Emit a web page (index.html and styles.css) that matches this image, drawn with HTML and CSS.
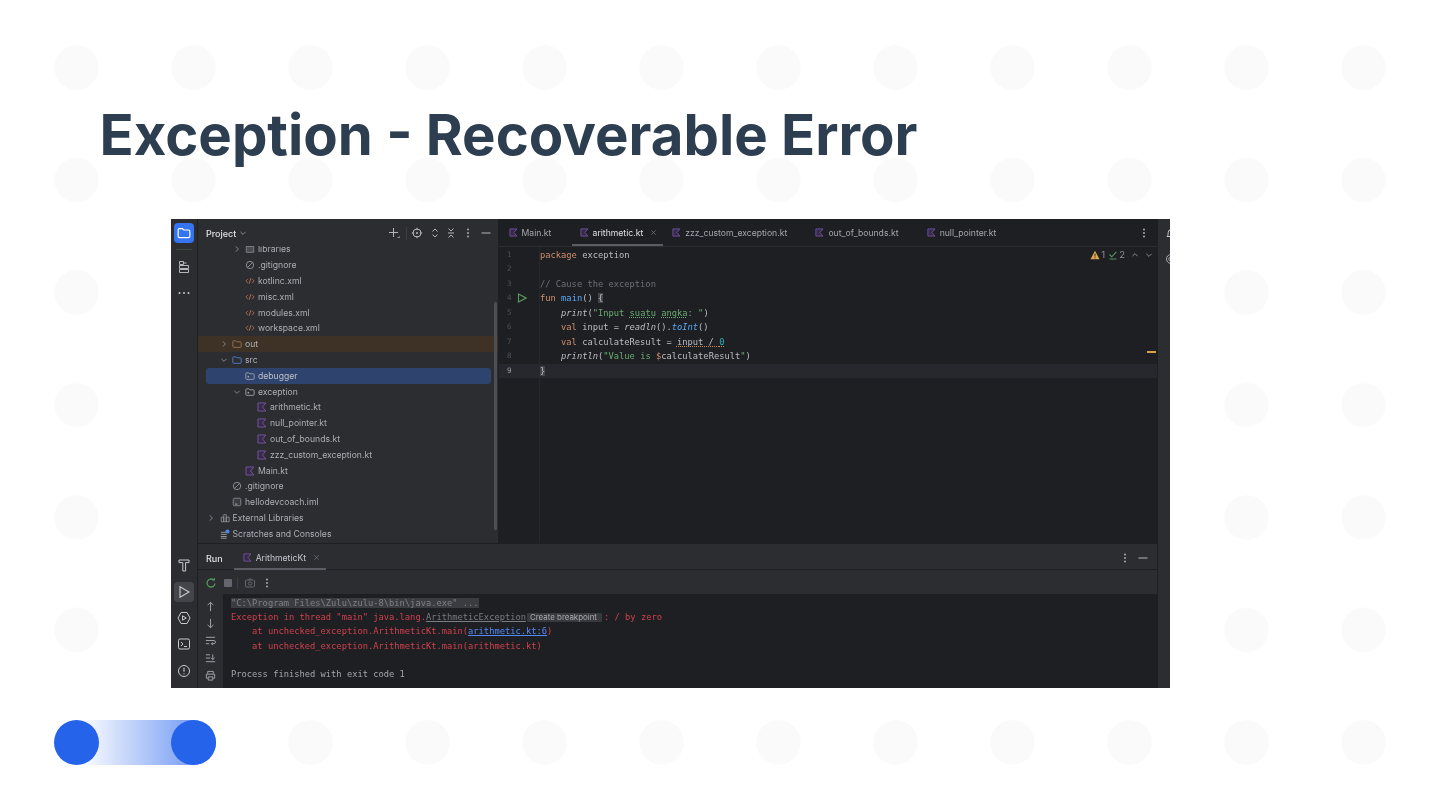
FILE: index.html
```html
<!DOCTYPE html>
<html lang="en">
<head>
<meta charset="utf-8">
<title>Exception - Recoverable Error</title>
<link rel="stylesheet" href="styles.css">
</head>
<body>
<svg class="defs" width="0" height="0" aria-hidden="true">
  <symbol id="kt" viewBox="0 0 12 12"><path d="M1.2 1.2h9.4L6.6 6l4 4.8H1.2z" fill="#352b49" stroke="#70539f" stroke-width="1.2"/></symbol>
  <symbol id="folder" viewBox="0 0 12 12"><path d="M1 3.2c0-.6.4-1 1-1h2.6l1.2 1.2H10c.6 0 1 .4 1 1v4.6c0 .6-.4 1-1 1H2c-.6 0-1-.4-1-1z" fill="none" stroke="currentColor" stroke-width="1"/></symbol>
  <symbol id="pkg" viewBox="0 0 12 12"><path d="M1 3.2c0-.6.4-1 1-1h2.6l1.2 1.2H10c.6 0 1 .4 1 1v4.6c0 .6-.4 1-1 1H2c-.6 0-1-.4-1-1z" fill="none" stroke="#a8abb2" stroke-width="1"/><circle cx="4" cy="6.8" r="1" fill="#a8abb2"/></symbol>
  <symbol id="ignore" viewBox="0 0 12 12"><circle cx="6" cy="6" r="4.4" fill="none" stroke="#9a9da5" stroke-width="1"/><path d="M3 9l6-6" stroke="#9a9da5" stroke-width="1"/></symbol>
  <symbol id="xml" viewBox="0 0 12 12"><path d="M3.6 3.4L1 6l2.6 2.6M8.4 3.4L11 6 8.4 8.6" fill="none" stroke="#b5654a" stroke-width="1.1"/><path d="M7 2.6L5 9.4" stroke="#c07a60" stroke-width="1"/></symbol>
  <symbol id="lib" viewBox="0 0 12 12"><path d="M1.5 3h9v7h-9z" fill="#4a4c52" stroke="#85888f" stroke-width="1"/></symbol>
  <symbol id="libs" viewBox="0 0 12 12"><path d="M1.5 5h3v5.5h-3zM4.5 2h3v8.5h-3zM7.5 5h3.5v5.5H7.5z" fill="none" stroke="#9a9da5" stroke-width=".9"/></symbol>
  <symbol id="scratch" viewBox="0 0 12 12"><path d="M1 4h7M1 6.5h7M1 9h7M1 11h7" stroke="#9a9da5" stroke-width="1.1"/><circle cx="9" cy="3" r="2.5" fill="#4f83e8"/></symbol>
  <symbol id="iml" viewBox="0 0 12 12"><rect x="1.5" y="1.5" width="9" height="9" rx="1.5" fill="#3a3c40" stroke="#8c8f96"/><path d="M3.5 8.5h3" stroke="#b4b6bc"/></symbol>
  <symbol id="chev-r" viewBox="0 0 8 8"><path d="M2.8 1.4L5.4 4 2.8 6.6" fill="none" stroke="#85888f" stroke-width="1"/></symbol>
  <symbol id="chev-d" viewBox="0 0 8 8"><path d="M1.4 2.8L4 5.4l2.6-2.6" fill="none" stroke="#85888f" stroke-width="1"/></symbol>
  <symbol id="chev-u" viewBox="0 0 8 8"><path d="M1.4 5.2L4 2.6l2.6 2.6" fill="none" stroke="#85888f" stroke-width="1"/></symbol>
  <symbol id="dots-v" viewBox="0 0 12 12"><circle cx="6" cy="2.5" r=".9" fill="#b4b6bc"/><circle cx="6" cy="6" r=".9" fill="#b4b6bc"/><circle cx="6" cy="9.5" r=".9" fill="#b4b6bc"/></symbol>
  <symbol id="minus" viewBox="0 0 12 12"><path d="M1.5 6h9" stroke="#b4b6bc" stroke-width="1"/></symbol>
  <symbol id="close" viewBox="0 0 8 8"><path d="M1.5 1.5l5 5M6.5 1.5l-5 5" stroke="#6f7278" stroke-width=".9"/></symbol>
</svg>

<main class="slide">
  <h1 class="title">Exception - Recoverable Error</h1>

  <section class="ide">
    <aside class="rail">
      <div class="rail-group">
        <span class="rail-btn active"><svg class="i14" viewBox="0 0 12 12"><path d="M1 3.2c0-.6.4-1 1-1h2.6l1.2 1.2H10c.6 0 1 .4 1 1v4.6c0 .6-.4 1-1 1H2c-.6 0-1-.4-1-1z" fill="none" stroke="#fff" stroke-width="1"/></svg></span>
        <span class="rail-sep"></span>
        <span class="rail-btn"><svg class="i14" viewBox="0 0 14 14"><path d="M2.500 1.500h4v3h-4zM2.500 5.500h9v3h-9zM2.500 9.500h9v3h-9zM6.500 3h3" fill="none" stroke="#b4b6bc"/></svg></span>
        <span class="rail-btn"><svg class="i14" viewBox="0 0 14 14"><circle cx="2.500" cy="7" r="1" fill="#c8cacf"/><circle cx="7" cy="7" r="1" fill="#c8cacf"/><circle cx="11.500" cy="7" r="1" fill="#c8cacf"/></svg></span>
      </div>
      <div class="rail-group">
        <span class="rail-btn"><svg class="i14" viewBox="0 0 14 14"><path d="M2 2h10v2.600H8.600V13H5.800V4.600H2z" fill="none" stroke="#c8cacf"/></svg></span>
        <span class="rail-btn current"><svg class="i14" viewBox="0 0 14 14"><path d="M3 1.800L12 7l-9 5.200z" fill="none" stroke="#c8cacf" stroke-width="1.100"/></svg></span>
        <span class="rail-btn"><svg class="i14" viewBox="0 0 14 14"><path d="M4 1.500h6L13 7l-3 5.500H4L1 7z" fill="none" stroke="#c8cacf"/><path d="M5.500 4.800L9.300 7l-3.800 2.200z" fill="none" stroke="#c8cacf"/></svg></span>
        <span class="rail-btn"><svg class="i14" viewBox="0 0 14 14"><rect x="1.500" y="2" width="11" height="10" rx="1.500" fill="none" stroke="#c8cacf"/><path d="M4 5l2 2-2 2M7 9.500h3" fill="none" stroke="#c8cacf"/></svg></span>
        <span class="rail-btn"><svg class="i14" viewBox="0 0 14 14"><circle cx="7" cy="7" r="5.500" fill="none" stroke="#c8cacf"/><path d="M7 3.800v4M7 9.300v1" stroke="#c8cacf" stroke-width="1.100"/></svg></span>
      </div>
    </aside>

    <div class="workspace">
      <div class="top">
        <section class="project">
          <header class="panel-head">
            <span class="panel-name">Project</span>
            <svg class="i8 chev" viewBox="0 0 8 8"><use href="#chev-d"/></svg>
            <span class="panel-tools">
              <svg class="i12 t-plus" viewBox="0 0 12 12"><path d="M5.500 1v9M1 5.500h9" stroke="#b4b6bc"/><path d="M9.500 10.500h2v-1" fill="#b4b6bc" stroke="#b4b6bc" stroke-width=".6"/></svg>
              <span class="tool-sep"></span>
              <svg class="i12 t-target" viewBox="0 0 12 12"><circle cx="6" cy="6" r="4" fill="none" stroke="#b4b6bc"/><path d="M6 .8v2.400M6 8.800v2.400M.8 6h2.400M8.800 6h2.400" stroke="#b4b6bc"/><circle cx="6" cy="6" r="1" fill="#b4b6bc"/></svg>
              <svg class="i12 t-updown" viewBox="0 0 12 12"><path d="M3.500 4.500L6 2l2.500 2.500M3.500 7.500L6 10l2.500-2.500" fill="none" stroke="#b4b6bc"/></svg>
              <svg class="i12 t-collapse" viewBox="0 0 12 12"><path d="M3.500 1.500L6 4l2.500-2.500M3.500 10.500L6 8l2.500 2.500M3 6h6" fill="none" stroke="#b4b6bc"/></svg>
              <svg class="i12 t-dots" viewBox="0 0 12 12"><use href="#dots-v"/></svg>
              <svg class="i12 t-min" viewBox="0 0 12 12"><use href="#minus"/></svg>
            </span>
          </header>
          <div class="tree-clip">
            <ul class="tree">
              <li class="row d3"><svg class="chevron" viewBox="0 0 8 8"><use href="#chev-r"/></svg><svg class="ic" viewBox="0 0 12 12"><use href="#lib"/></svg>libraries</li>
              <li class="row d3"><svg class="ic" viewBox="0 0 12 12"><use href="#ignore"/></svg>.gitignore</li>
              <li class="row d3"><svg class="ic" viewBox="0 0 12 12"><use href="#xml"/></svg>kotlinc.xml</li>
              <li class="row d3"><svg class="ic" viewBox="0 0 12 12"><use href="#xml"/></svg>misc.xml</li>
              <li class="row d3"><svg class="ic" viewBox="0 0 12 12"><use href="#xml"/></svg>modules.xml</li>
              <li class="row d3"><svg class="ic" viewBox="0 0 12 12"><use href="#xml"/></svg>workspace.xml</li>
              <li class="row d2 excluded"><svg class="chevron" viewBox="0 0 8 8"><use href="#chev-r"/></svg><svg class="ic brown" viewBox="0 0 12 12"><use href="#folder"/></svg>out</li>
              <li class="row d2"><svg class="chevron" viewBox="0 0 8 8"><use href="#chev-d"/></svg><svg class="ic blue" viewBox="0 0 12 12"><use href="#folder"/></svg>src</li>
              <li class="row d3 selected"><svg class="ic" viewBox="0 0 12 12"><use href="#pkg"/></svg>debugger</li>
              <li class="row d3"><svg class="chevron" viewBox="0 0 8 8"><use href="#chev-d"/></svg><svg class="ic" viewBox="0 0 12 12"><use href="#pkg"/></svg>exception</li>
              <li class="row d4"><svg class="ic" viewBox="0 0 12 12"><use href="#kt"/></svg>arithmetic.kt</li>
              <li class="row d4"><svg class="ic" viewBox="0 0 12 12"><use href="#kt"/></svg>null_pointer.kt</li>
              <li class="row d4"><svg class="ic" viewBox="0 0 12 12"><use href="#kt"/></svg>out_of_bounds.kt</li>
              <li class="row d4"><svg class="ic" viewBox="0 0 12 12"><use href="#kt"/></svg>zzz_custom_exception.kt</li>
              <li class="row d3"><svg class="ic" viewBox="0 0 12 12"><use href="#kt"/></svg>Main.kt</li>
              <li class="row d2"><svg class="ic" viewBox="0 0 12 12"><use href="#ignore"/></svg>.gitignore</li>
              <li class="row d2"><svg class="ic" viewBox="0 0 12 12"><use href="#iml"/></svg>hellodevcoach.iml</li>
              <li class="row d1"><svg class="chevron" viewBox="0 0 8 8"><use href="#chev-r"/></svg><svg class="ic" viewBox="0 0 12 12"><use href="#libs"/></svg>External Libraries</li>
              <li class="row d1"><svg class="ic" viewBox="0 0 12 12"><use href="#scratch"/></svg>Scratches and Consoles</li>
            </ul>
            <span class="tree-scroll"></span>
          </div>
        </section>

        <section class="editor">
          <nav class="tabs">
            <span class="tab"><svg class="ic" viewBox="0 0 12 12"><use href="#kt"/></svg>Main.kt</span>
            <span class="tab on"><svg class="ic" viewBox="0 0 12 12"><use href="#kt"/></svg>arithmetic.kt<svg class="x" viewBox="0 0 8 8"><use href="#close"/></svg></span>
            <span class="tab after-on"><svg class="ic" viewBox="0 0 12 12"><use href="#kt"/></svg>zzz_custom_exception.kt</span>
            <span class="tab"><svg class="ic" viewBox="0 0 12 12"><use href="#kt"/></svg>out_of_bounds.kt</span>
            <span class="tab"><svg class="ic" viewBox="0 0 12 12"><use href="#kt"/></svg>null_pointer.kt</span>
            <svg class="i12 tabs-more" viewBox="0 0 12 12"><use href="#dots-v"/></svg>
          </nav>
          <div class="code-area">
            <div class="gutter">
              <div class="ln">1</div><div class="ln">2</div><div class="ln">3</div>
              <div class="ln">4<svg class="gutter-run" viewBox="0 0 10 10"><path d="M1.500 1l7.500 4-7.500 4z" fill="none" stroke="#57965c" stroke-width="1.200"/></svg></div>
              <div class="ln">5</div><div class="ln">6</div><div class="ln">7</div><div class="ln">8</div>
              <div class="ln cur">9</div>
            </div>
            <div class="code">
              <div class="cl"><span class="kw">package</span> exception</div>
              <div class="cl"></div>
              <div class="cl cmt">// Cause the exception</div>
              <div class="cl"><span class="kw">fun</span> <span class="fn">main</span>() <span class="brace">{</span></div>
              <div class="cl">    <i>print</i>(<span class="str">"Input <u class="typo">suatu</u> <u class="typo">angka</u>: "</span>)</div>
              <div class="cl">    <span class="kw">val</span> input = <i>readln</i>().<i class="fn">toInt</i>()</div>
              <div class="cl">    <span class="kw">val</span> calculateResult = <u class="warn">input / <span class="num">0</span></u></div>
              <div class="cl">    <i>println</i>(<span class="str">"Value is <span class="kw">$</span></span>calculateResult<span class="str">"</span>)</div>
              <div class="cl caret"><span class="brace">}</span></div>
            </div>
            <div class="inspect">
              <svg class="i10" viewBox="0 0 10 10"><path d="M5 .8l4.500 8.400H.5z" fill="#e0a84a"/><path d="M5 3.600v3M5 7.400v1" stroke="#2b2d30"/></svg><span>1</span>
              <svg class="i10 gap" viewBox="0 0 10 10"><path d="M1.500 4.500l2.300 2.300 4.500-5M1.500 9h7" fill="none" stroke="#57965c" stroke-width="1.100"/></svg><span>2</span>
              <svg class="i8 gap2" viewBox="0 0 8 8"><use href="#chev-u"/></svg>
              <svg class="i8 gap2" viewBox="0 0 8 8"><use href="#chev-d"/></svg>
            </div>
            <span class="stripe"></span>
          </div>
        </section>
      </div>

      <section class="run">
        <header class="run-head">
          <span class="panel-name">Run</span>
          <span class="run-tab"><svg class="ic" viewBox="0 0 12 12"><use href="#kt"/></svg>ArithmeticKt<svg class="x" viewBox="0 0 8 8"><use href="#close"/></svg></span>
          <span class="run-tools">
            <svg class="i12" viewBox="0 0 12 12"><use href="#dots-v"/></svg>
            <svg class="i12" viewBox="0 0 12 12"><use href="#minus"/></svg>
          </span>
        </header>
        <div class="run-bar">
          <svg class="i12" viewBox="0 0 12 12"><path d="M10 6.500A4 4 0 1 1 8.700 3" fill="none" stroke="#57965c" stroke-width="1.300"/><path d="M7 3.500h3v-3z" fill="#57965c"/></svg>
          <span class="stop"></span>
          <span class="bar-sep"></span>
          <svg class="i12 dim" viewBox="0 0 12 12"><rect x="1.500" y="3" width="9" height="7" rx="1" fill="none" stroke="#63666c"/><circle cx="6" cy="6.500" r="1.700" fill="none" stroke="#63666c"/><path d="M4.500 3l.5-1h2l.5 1" fill="none" stroke="#63666c"/></svg>
          <svg class="i12" viewBox="0 0 12 12"><use href="#dots-v"/></svg>
        </div>
        <div class="run-body">
          <div class="run-side">
            <svg class="i11" viewBox="0 0 12 12"><path d="M6 11V1.500M2.800 4.500L6 1.500l3.200 3" fill="none" stroke="#a8abb2"/></svg>
            <svg class="i11" viewBox="0 0 12 12"><path d="M6 1v9.500M2.800 7.500L6 10.500l3.200-3" fill="none" stroke="#a8abb2"/></svg>
            <svg class="i11" viewBox="0 0 12 12"><path d="M1 2.500h10M1 6h9a1.800 1.800 0 0 1 0 3.500H7M8.500 8l-1.500 1.500L8.500 11M1 9.500h3.500" fill="none" stroke="#a8abb2"/></svg>
            <svg class="i11" viewBox="0 0 12 12"><path d="M1 2h4.500M1 5.500h4.500M1 9.500h10M8.500 1.500v5.500M6.500 5.200L8.500 7.200l2-2" fill="none" stroke="#a8abb2"/></svg>
            <svg class="i11" viewBox="0 0 12 12"><path d="M3 4V1.500h6V4M3 9H1.500V4.500h9V9H9M3.500 7.500h5v3.500h-5z" fill="none" stroke="#a8abb2"/></svg>
            <svg class="i11" viewBox="0 0 12 12"><path d="M3 4.500h6M3 8h6" stroke="#a8abb2"/></svg>
          </div>
          <div class="console">
            <div class="cn"><span class="cmd">"C:\Program Files\Zulu\zulu-8\bin\java.exe" ...</span></div>
            <div class="cn err">Exception in thread "main" java.lang.<u class="exc">ArithmeticException</u><span class="bp">Create breakpoint</span>: / by zero</div>
            <div class="cn err">    at unchecked_exception.ArithmeticKt.main(<u class="link">arithmetic.kt:6</u>)</div>
            <div class="cn err">    at unchecked_exception.ArithmeticKt.main(arithmetic.kt)</div>
            <div class="cn"></div>
            <div class="cn">Process finished with exit code 1</div>
          </div>
        </div>
      </section>
    </div>

    <aside class="rail-right">
      <svg class="i12" viewBox="0 0 12 12"><path d="M2 9.500c1-1 1.200-2 1.200-4a2.800 2.800 0 0 1 5.600 0c0 2 .2 3 1.200 4zM5 11h2" fill="none" stroke="#c8cacf"/></svg>
      <svg class="i12" viewBox="0 0 12 12"><circle cx="6" cy="6" r="4.500" fill="none" stroke="#a8abb2"/><circle cx="6" cy="6" r="2.200" fill="none" stroke="#a8abb2"/></svg>
    </aside>
  </section>

  <div class="pager"><span class="knob"></span><span class="knob"></span></div>
</main>
</body>
</html>
```

FILE: styles.css
```css
* { box-sizing: border-box; }
html, body { margin: 0; padding: 0; }
body {
  width: 1440px;
  height: 810px;
  overflow: hidden;
  background-color: #fff;
  background-image: radial-gradient(circle 22.5px at center, #fafafa 97%, rgba(250,250,250,0) 100%);
  background-size: 117px 112.5px;
  background-position: 18px 11.25px;
  font-family: Inter, "Liberation Sans", sans-serif;
}
.defs { position: absolute; }
.slide { display: flex; flex-direction: column; height: 810px; }
.title {
  margin: 100px 0 0 99.5px;
  height: 70px;
  font-size: 56.3px;
  line-height: 70px;
  font-weight: 700;
  color: #2c3e50;
}
svg { flex: none; display: block; }
.i8 { width: 8px; height: 8px; }
.i10 { width: 10px; height: 10px; }
.i11 { width: 11px; height: 11px; }
.i12 { width: 12px; height: 12px; }
.i14 { width: 14px; height: 14px; }

.ide {
  margin: 49px 0 0 171px;
  width: 999px;
  height: 469px;
  display: flex;
  background: #2b2d30;
  color: #bcbec4;
  font-size: 8.65px;
  overflow: hidden;
  filter: blur(.5px);
}
.rail {
  width: 27px;
  flex: none;
  display: flex;
  flex-direction: column;
  justify-content: space-between;
  border-right: 1px solid #1e1f22;
  padding: 4px 0 7.5px;
}
.rail-group { display: flex; flex-direction: column; align-items: center; gap: 6.3px; }
.rail-btn { width: 20px; height: 20px; border-radius: 4px; display: flex; align-items: center; justify-content: center; }
.rail-btn.active { background: #3574f0; }
.rail-btn.current { background: #43454a; }
.rail-sep { width: 16px; height: 1px; background: #3d4a40; }

.workspace { flex: 1; min-width: 0; display: flex; flex-direction: column; }
.top { height: 325px; display: flex; border-bottom: 1px solid #1e1f22; }

.project { width: 301px; flex: none; display: flex; flex-direction: column; border-right: 1px solid #1e1f22; }
.panel-head { height: 27px; flex: none; display: flex; align-items: center; padding: 1px 0 0 8px; }
.panel-name { font-size: 9px; font-weight: 500; color: #dfe1e5; }
.chev { margin-left: 3px; }
.panel-tools { margin-left: auto; display: flex; align-items: center; padding-right: 6.5px; }
.tool-sep { width: 1px; height: 13px; background: #3c3e42; margin: 0 4px 0 6px; }
.t-plus { margin-left: 1px; }
.t-target { margin-right: 6px; }
.t-updown { margin-right: 4px; }
.t-collapse { margin-right: 5px; }
.t-dots { margin-right: 6px; }

.tree-clip { flex: 1; position: relative; overflow: hidden; }
.tree { list-style: none; margin: -4.5px 0 0; padding: 0; }
.row { height: 15.8px; display: flex; align-items: center; position: relative; color: #adafb5; font-size: 8.65px; white-space: nowrap; }
.row .ic { width: 10px; height: 10px; margin-right: 3px; }
.chevron { width: 8px; height: 8px; position: absolute; }
.d1 { padding-left: 21.5px; }
.d2 { padding-left: 34px; }
.d3 { padding-left: 47px; }
.d4 { padding-left: 59px; }
.d1 .chevron { left: 9px; }
.d2 .chevron { left: 22px; }
.d3 .chevron { left: 34.5px; }
.excluded { background: #3d3225; }
.selected { background: #2e436e; border-radius: 3px; margin: 0 7px 0 8px; padding-left: 39px; color: #bfc2ca; }
.brown { color: #a0785a; }
.blue { color: #5a86d6; }
.tree-scroll { position: absolute; right: 1px; top: 56px; width: 3px; height: 228px; background: #4d4f54; border-radius: 2px; }

.editor { flex: 1; min-width: 0; display: flex; flex-direction: column; background: #1e1f22; }
.tabs { height: 28px; flex: none; display: flex; align-items: stretch; padding-left: 1.5px; background: #1e1f22; border-bottom: 1px solid #2b2d30; }
.tab { display: flex; align-items: center; gap: 4px; padding: 0 20.2px 0 8px; color: #a4a7ae; font-size: 8.65px; white-space: nowrap; }
.tab .ic, .run-tab .ic { width: 9px; height: 9px; }
.tab.on { padding-right: 6px; color: #dfe1e5; border-top: 2px solid transparent; border-bottom: 2px solid #5a5d63; }
.tab.after-on { margin-left: 1px; }
.tab .x { margin-left: 3px; }
.x { width: 7px; height: 7px; }
.tabs-more { margin: auto 7px auto auto; }

.code-area { flex: 1; display: flex; position: relative; font-family: "DejaVu Sans Mono", "Liberation Mono", monospace; font-size: 8.75px; line-height: 14.45px; color: #bcbec4; padding-top: 1px; }
.gutter { width: 41px; flex: none; border-right: 1px solid #26282b; height: calc(100% + 1px); margin-top: -1px; padding-top: 1px; }
.ln { position: relative; padding-left: 8px; color: #4b5059; font-size: 7.5px; height: 14.45px; }
.ln.cur { color: #a1a3ab; background: #26282e; }
.gutter-run { position: absolute; left: 18px; top: 2px; width: 10px; height: 10px; }
.code { flex: 1; min-width: 0; }
.cl { height: 14.45px; white-space: pre; }
.cl.caret { background: #26282e; }
.kw { color: #cf8e6d; }
.fn { color: #56a8f5; }
.str { color: #6aab73; }
.cmt { color: #6c7077; }
.num { color: #2aacb8; }
.brace { background: #43454a; color: #bcbec4; }
.typo { text-decoration: underline dotted #6aab73; }
.warn { text-decoration: underline dotted #c98a45; }
.inspect { position: absolute; top: 1px; right: 4px; display: flex; align-items: center; height: 14px; font-family: Inter, sans-serif; font-size: 9.5px; color: #8f9298; gap: 1px; }
.inspect .gap { margin-left: 2px; }
.inspect .gap2 { margin-left: 5px; }
.stripe { position: absolute; right: 1px; top: 104px; width: 9px; height: 2px; background: #d9a343; }

.run { flex: 1; min-height: 0; display: flex; flex-direction: column; }
.run-head { height: 26px; flex: none; display: flex; align-items: center; padding: 3px 0 0 8px; border-bottom: 1px solid #1e1f22; }
.run-tab { display: flex; align-items: center; align-self: stretch; gap: 4px; margin: -3px 0 -1px 11px; padding: 3px 6px 0 9px; color: #c5c8d0; border-bottom: 2px solid #5a5d63; }
.run-tab .x { margin-left: 3px; }
.run-tools { margin-left: auto; display: flex; gap: 6px; padding-right: 8px; }
.run-bar { height: 24px; flex: none; display: flex; align-items: center; gap: 5.6px; padding: 1px 0 0 7px; }
.stop { width: 8px; height: 8px; background: #63666c; border-radius: 1px; margin-left: 1px; }
.bar-sep { width: 1px; height: 12px; background: #3c3e42; }
.run-body { flex: 1; min-height: 0; display: flex; overflow: hidden; }
.run-side { width: 25px; flex: none; display: flex; flex-direction: column; align-items: center; gap: 6.2px; padding-top: 7px; }
.console { flex: 1; background: #1e1f22; padding: 1.5px 0 0 8px; font-family: "DejaVu Sans Mono", "Liberation Mono", monospace; font-size: 8.75px; line-height: 14.4px; color: #a4a7ae; }
.cn { height: 14.4px; white-space: pre; }
.cmd { background: #3a3c40; color: #7f8289; }
.err { color: #d0404f; }
.exc { color: #797c83; text-decoration-color: #797c83; }
.bp { display: inline-block; width: 75px; height: 9px; margin: 0 2px 0 1px; background: #38393c; border-radius: 1px; color: #a8abb2; font-family: Inter, sans-serif; font-size: 7.9px; line-height: 9px; padding-left: 3px; vertical-align: -2px; white-space: nowrap; overflow: hidden; }
.link { color: #548af7; }

.rail-right { width: 13px; flex: none; background: #2b2d30; border-left: 1px solid #1e1f22; display: flex; flex-direction: column; gap: 14px; padding: 8px 0 0 7px; overflow: hidden; }

.pager {
  margin: 32px 0 0 54px;
  width: 162px;
  height: 45px;
  display: flex;
  justify-content: space-between;
  border-radius: 23px;
  background: linear-gradient(90deg, #fff 15%, #2563eb 130%);
}
.knob { width: 45px; height: 45px; border-radius: 50%; background: #2563eb; }
```
